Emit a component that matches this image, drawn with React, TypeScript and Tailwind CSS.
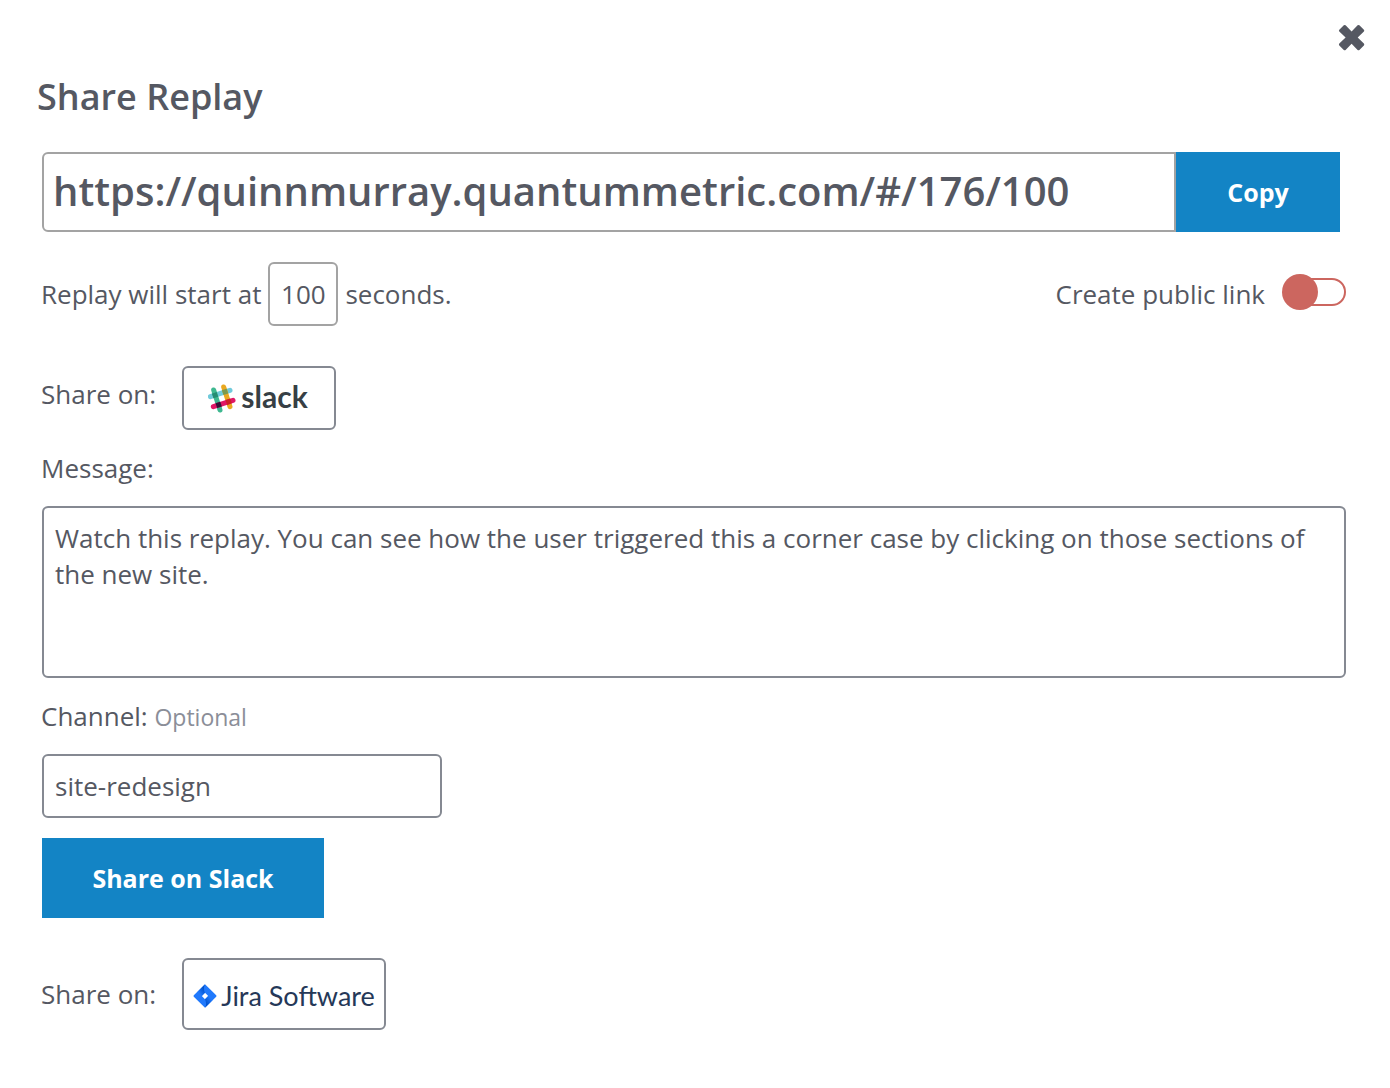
import React from "react";

function CloseIcon() {
  return (
    <svg className="h-7 w-7" viewBox="0 0 28 28" fill="#555862" aria-hidden="true">
      <path d="M5.800 1.300Q6.700 0.500 7.600 1.300L13.600 7.600 19.600 1.300Q20.500 0.500 21.400 1.300L25.900 5.800Q26.700 6.700 25.900 7.600L19.700 13.600 25.900 19.600Q26.700 20.500 25.900 21.400L21.400 25.900Q20.500 26.700 19.600 25.900L13.600 19.700 7.600 25.900Q6.700 26.700 5.800 25.900L1.300 21.400Q0.500 20.500 1.300 19.600L7.600 13.600 1.300 7.600Q0.500 6.700 1.300 5.800Z" />
    </svg>
  );
}

function SlackMark() {
  return (
    <svg className="h-[30px] w-7 shrink-0" viewBox="84 74 84 90" fill="none" strokeWidth="15" strokeLinecap="round" aria-hidden="true">
      <path d="M91 112 150 93" stroke="#70cadb" />
      <path d="M131 83 150 142" stroke="#e9a820" />
      <path d="M101 92 120 152" stroke="#3eb890" />
      <path d="M100 142 159 123" stroke="#e01765" />
      <g strokeLinecap="butt">
        <path d="M98 110 112.200 105.200" stroke="#248c73" />
        <path d="M128 100.200 142.200 95.500" stroke="#7a9a4f" />
        <path d="M109 139.100 123.200 134.500" stroke="#361238" />
        <path d="M139 129.500 153.200 124.900" stroke="#cc2027" />
      </g>
    </svg>
  );
}

function JiraMark() {
  return (
    <svg className="h-6 w-6 shrink-0" viewBox="0 0 24 24" aria-hidden="true">
      <defs>
        <linearGradient id="jira-left" x1="12" y1="5" x2="6" y2="9" gradientUnits="userSpaceOnUse">
          <stop offset="0.1" stopColor="#0052cc" />
          <stop offset="1" stopColor="#2079fc" />
        </linearGradient>
        <linearGradient id="jira-right" x1="12" y1="19" x2="18" y2="15" gradientUnits="userSpaceOnUse">
          <stop offset="0.1" stopColor="#0052cc" />
          <stop offset="1" stopColor="#2079fc" />
        </linearGradient>
      </defs>
      <path d="M12 0.300 23.200 11.300Q23.800 12 23.200 12.700L12 23.700 0.800 12.700Q0.200 12 0.800 11.300ZM12 8.800 8.800 12 12 15.200 15.200 12Z" fill="#2079fc" fillRule="evenodd" />
      <path d="M12 0.300Q9.800 4.500 12 8.800L8.800 12 4.500 7.700Z" fill="url(#jira-left)" />
      <path d="M15.200 12 12 15.200Q14.200 19.500 12 23.700L19.500 16.300Z" fill="url(#jira-right)" />
    </svg>
  );
}

export default function App() {
  return (
    <main className="min-h-screen bg-white pt-6 pr-11 pb-14 pl-[41px] font-['Open_Sans',sans-serif] text-[26px] leading-9 text-[#555862]">
      <div className="-mr-5 flex justify-end">
        <button type="button" aria-label="Close">
          <CloseIcon />
        </button>
      </div>
      <h1 className="-ml-1 mt-5 text-4xl leading-[50px] font-semibold">Share Replay</h1>

      <div className="mt-[30px] mr-1.5 ml-px flex h-20">
        <input
          aria-label="Replay link"
          readOnly
          defaultValue="https://quinnmurray.quantummetric.com/#/176/100"
          className="min-w-0 flex-1 rounded-l-md border-2 border-[#a3a3a3] px-[9px] pb-1 text-[40px] font-semibold outline-none"
        />
        <button type="button" className="w-[164px] bg-[#1384c5] text-[25px] font-bold text-white">
          Copy
        </button>
      </div>

      <div className="mt-[30px] flex items-center justify-between">
        <label className="flex items-center gap-[7px]">
          Replay will start at
          <input defaultValue="100" className="h-16 w-[70px] rounded-md border-2 border-[#a3a3a3] text-center outline-none" />
          seconds.
        </label>
        <label className="flex items-center gap-[17px]">
          Create public link
          <span className="relative mb-1 flex h-9 w-16 items-center">
            <input type="checkbox" role="switch" className="peer absolute inset-0 z-10 opacity-0" />
            <span className="ml-2 h-7 flex-1 rounded-full border-2 border-[#cc665f]" />
            <span className="absolute left-0 h-9 w-9 rounded-full bg-[#cc665f] peer-checked:left-7" />
          </span>
        </label>
      </div>

      <div className="mt-10 flex items-center gap-[26px]">
        <span className="pb-2">Share on:</span>
        <button type="button" className="flex h-16 w-[154px] items-center justify-center gap-[5px] rounded-md border-2 border-[#858992] pt-0.5 pr-0.5">
          <SlackMark />
          <span className="pb-1.5 font-[Lato,sans-serif] text-3xl leading-9 font-bold text-[#373f45]">slack</span>
        </button>
      </div>

      <label htmlFor="message" className="mt-5 block">
        Message:
      </label>
      <textarea
        id="message"
        defaultValue="Watch this replay. You can see how the user triggered this a corner case by clicking on those sections of the new site."
        className="mt-5 ml-px block h-[172px] w-[calc(100%-1px)] resize-none rounded-md border-2 border-[#858992] px-[11px] py-3 outline-none"
      />

      <label htmlFor="channel" className="mt-5 block">
        Channel: <span className="text-[23px] leading-none text-[#8b8e98]">Optional</span>
      </label>
      <input id="channel" defaultValue="site-redesign" className="mt-5 ml-px block h-16 w-[400px] rounded-md border-2 border-[#858992] px-[11px] outline-none" />
      <button type="button" className="mt-5 ml-px block h-20 w-[282px] bg-[#1384c5] text-[25px] font-bold text-white">
        Share on Slack
      </button>

      <div className="mt-10 flex items-center gap-[26px]">
        <span>Share on:</span>
        <button type="button" className="flex h-[72px] w-[204px] items-center justify-center gap-1 rounded-md border-2 border-[#858992] pt-1">
          <JiraMark />
          <span className="font-[Lato,sans-serif] text-[27px] whitespace-nowrap text-[#253858]">Jira Software</span>
        </button>
      </div>
    </main>
  );
}
